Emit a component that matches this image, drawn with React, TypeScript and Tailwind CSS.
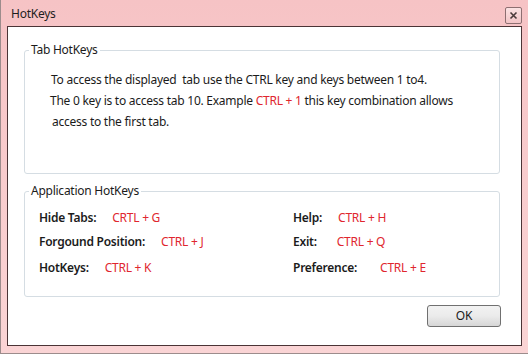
import React from "react";

const font = { fontFamily: '"Noto Sans", "Open Sans", sans-serif' };

const Key = ({ children, className = "" }: { children: React.ReactNode; className?: string }) => (
  <span className={"text-[#e0262e] " + className}>{children}</span>
);

const HotkeyRow = ({ label, value, gap, height }: { label: string; value: string; gap: string; height: string }) => (
  <div className={"flex items-center " + height}>
    <span className="font-semibold text-[#1b1b1b]">{label}</span>
    <Key className={gap}>{value}</Key>
  </div>
);

export default function App() {
  return (
    <div
      className="w-[528px] h-[354px] flex flex-col bg-gradient-to-b from-[#f6c3c5] to-[#fad4d5] border-l border-b border-[#9c8c8c] text-[12px] tracking-[-0.25px] text-[#1b1b1b]"
      style={font}
    >
      {/* title bar */}
      <div className="h-[26px] flex items-start justify-between pl-[10px] pr-[6px]">
        <span className="mt-[6px] leading-[16px] text-[#1e1e1e]">HotKeys</span>
        <button className="mt-[7px] w-[17px] h-[17px] flex items-center justify-center rounded-[2px] border border-[#8d6f71] bg-gradient-to-b from-[#fbe2e3] to-[#f2c4c6]">
          <svg width="9" height="9" viewBox="0 0 9 9">
            <path d="M1.5 1.5 L7.5 7.5 M7.5 1.5 L1.5 7.5" stroke="#4a3a3a" strokeWidth="1.6" />
          </svg>
        </button>
      </div>

      {/* client area */}
      <div className="mx-[6px] mb-[7px] flex-1 flex flex-col bg-white border border-[#4b3436]">
        <fieldset className="ml-[16px] mt-[15px] w-[476px] h-[132px] border border-[#d5dde3] rounded-[3px]">
          <legend className="ml-[4px] px-[2px] leading-[16px]">Tab HotKeys</legend>
          <div className="pl-[26px] pt-[11px] leading-[21px]">
            <div>To access the displayed&nbsp; tab use the CTRL key and keys between 1 to4.</div>
            <div className="-ml-[1px]">
              The 0 key is to access tab 10. Example <Key>CTRL + 1</Key> this key combination allows
            </div>
            <div className="ml-[1px]">access to the first tab.</div>
          </div>
        </fieldset>

        <fieldset className="ml-[16px] mt-[9px] w-[476px] h-[114px] border border-[#d5dde3] rounded-[3px]">
          <legend className="ml-[4px] px-[2px] leading-[16px]">Application HotKeys</legend>
          <div className="grid grid-cols-[254px_1fr] pl-[14px] pt-[7px]">
            <div className="flex flex-col">
              <HotkeyRow label="Hide Tabs:" value="CRTL + G" gap="ml-[16px]" height="h-[24px]" />
              <HotkeyRow label="Forgound Position:" value="CTRL + J" gap="ml-[16px]" height="h-[24px]" />
              <HotkeyRow label="HotKeys:" value="CTRL + K" gap="ml-[16px]" height="h-[28px]" />
            </div>
            <div className="flex flex-col">
              <HotkeyRow label="Help:" value="CTRL + H" gap="ml-[16px]" height="h-[24px]" />
              <HotkeyRow label="Exit:" value="CTRL + Q" gap="ml-[20px]" height="h-[24px]" />
              <HotkeyRow label="Preference:" value="CTRL + E" gap="ml-[23px]" height="h-[28px]" />
            </div>
          </div>
        </fieldset>

        <div className="flex justify-end mr-[20px] mt-[8px]">
          <button className="w-[74px] h-[22px] rounded-[3px] border border-[#707070] bg-gradient-to-b from-[#f2f2f2] via-[#ebebeb] to-[#d6d6d6] text-[12px] text-[#1b1b1b] leading-none">
            OK
          </button>
        </div>
      </div>
    </div>
  );
}
